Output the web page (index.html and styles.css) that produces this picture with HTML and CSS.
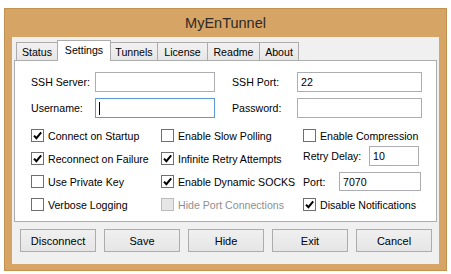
FILE: index.html
```html
<!DOCTYPE html>
<html lang="en">

<head>
    <meta charset="UTF-8">
    <title>MyEnTunnel</title>
    <link rel="stylesheet" href="styles.css">
</head>

<body>
    <div class="window">
        <div class="titleBar">MyEnTunnel</div>

        <div class="client">
            <div class="tabs">
                <div class="tab">Status</div>
                <div class="tab selected">Settings</div>
                <div class="tab">Tunnels</div>
                <div class="tab">License</div>
                <div class="tab">Readme</div>
                <div class="tab">About</div>
            </div>

            <div class="panel">
                <div class="fields">
                    <span class="label">SSH Server:</span>
                    <div class="textBox"></div>
                    <span></span>
                    <span class="label">SSH Port:</span>
                    <div class="textBox">22</div>

                    <span class="label">Username:</span>
                    <div class="textBox focused"><span class="caret"></span></div>
                    <span></span>
                    <span class="label">Password:</span>
                    <div class="textBox"></div>
                </div>

                <div class="options">
                    <label class="check"><span class="box on"></span>Connect on Startup</label>
                    <label class="check"><span class="box"></span>Enable Slow Polling</label>
                    <label class="check"><span class="box"></span>Enable Compression</label>

                    <label class="check"><span class="box on"></span>Reconnect on Failure</label>
                    <label class="check"><span class="box on"></span>Infinite Retry Attempts</label>
                    <div class="pair retry">
                        <span class="pairLabel">Retry Delay:</span>
                        <div class="textBox small">10</div>
                    </div>

                    <label class="check"><span class="box"></span>Use Private Key</label>
                    <label class="check"><span class="box on"></span>Enable Dynamic SOCKS</label>
                    <div class="pair port">
                        <span class="pairLabel">Port:</span>
                        <div class="textBox wide">7070</div>
                    </div>

                    <label class="check"><span class="box"></span>Verbose Logging</label>
                    <label class="check disabled"><span class="box"></span>Hide Port Connections</label>
                    <label class="check"><span class="box on"></span>Disable Notifications</label>
                </div>
            </div>

            <div class="buttons">
                <div class="btn">Disconnect</div>
                <div class="btn">Save</div>
                <div class="btn">Hide</div>
                <div class="btn">Exit</div>
                <div class="btn">Cancel</div>
            </div>
        </div>
    </div>
</body>

</html>
```

FILE: styles.css
```css
body {
    margin: 0;
    background-color: #ffffff;
    font-family: "Liberation Sans", Arial, sans-serif;
    font-size: 10.6px;
    color: #000000;
}

.window {
    box-sizing: border-box;
    width: 443px;
    height: 263px;
    margin: 8px 0 0 4px;
    padding: 0 7px 6px 7px;
    border: 1px solid #c4914f;
    background-color: #d6a464;
    display: flex;
    flex-direction: column;
}

.titleBar {
    height: 28px;
    display: flex;
    align-items: center;
    justify-content: center;
    font-size: 14.5px;
    color: #2e2a26;
}

.client {
    flex: 1;
    background-color: #f0f0f0;
    padding-top: 3px;
    display: flex;
    flex-direction: column;
}

/* Tab strip */
.tabs {
    display: flex;
    align-items: flex-end;
    height: 20px;
    padding-left: 4px;
}

.tab {
    box-sizing: border-box;
    height: 18px;
    border: 1px solid #acacac;
    border-bottom: none;
    margin-left: -1px;
    background-image: linear-gradient(#f2f2f2, #e6e6e6);
    display: flex;
    align-items: center;
    justify-content: center;
}

.tab:first-child {
    margin-left: 0;
    width: 42px;
}

.tab:nth-child(2) { width: 54px; }
.tab:nth-child(3) { width: 48px; }
.tab:nth-child(4) { width: 51px; }
.tab:nth-child(5) { width: 53px; }
.tab:nth-child(6) { width: 40px; }

.tab.selected {
    height: 21px;
    margin-bottom: -1px;
    background: #ffffff;
    position: relative;
    z-index: 1;
    padding-bottom: 3px;
}

/* Tab page */
.panel {
    box-sizing: border-box;
    height: 162px;
    margin: 0 2px;
    border: 1px solid #adadad;
    background-color: #ffffff;
}

.fields {
    display: grid;
    grid-template-columns: 64px 120px 17px 65px 125px;
    grid-auto-rows: 20px;
    row-gap: 6px;
    padding: 11px 0 0 16px;
    align-items: center;
}

.textBox {
    box-sizing: border-box;
    height: 20px;
    border: 1px solid #abadb3;
    background: #ffffff;
    padding: 0 3px;
    display: flex;
    align-items: center;
}

.textBox.focused {
    border-color: #5b9bd5;
}

.caret {
    width: 1px;
    height: 13px;
    background: #000000;
}

.options {
    display: grid;
    grid-template-columns: 130px 142px 1fr;
    grid-auto-rows: 23px;
    padding: 6px 0 0 16px;
    align-items: center;
}

.check {
    display: flex;
    align-items: center;
    gap: 4px;
    white-space: nowrap;
}

.box {
    box-sizing: border-box;
    width: 13px;
    height: 13px;
    border: 1px solid #6f6f6f;
    background: #ffffff;
}

.box.on {
    background-image: url("data:image/svg+xml,%3Csvg xmlns='http://www.w3.org/2000/svg' width='11' height='11'%3E%3Cpolyline points='2,5.6 4.4,8.2 9.2,2.4' fill='none' stroke='black' stroke-width='2'/%3E%3C/svg%3E");
    background-repeat: no-repeat;
}

.check.disabled {
    color: #8f8f8f;
}

.check.disabled .box {
    border-color: #bcbcbc;
    background: #e6e6e6;
}

.pair {
    display: flex;
    align-items: center;
}

.retry .pairLabel { width: 66px; }
.retry { margin-top: -5px; }
.port .pairLabel { width: 36px; }

.textBox.small { width: 50px; }
.textBox.wide { width: 82px; height: 19px; }

/* Bottom buttons */
.buttons {
    display: flex;
    gap: 8px;
    padding: 7px 0 0 8px;
}

.btn {
    box-sizing: border-box;
    width: 76px;
    height: 23px;
    border: 1px solid #acacac;
    background-image: linear-gradient(#f0f0f0, #e5e5e5);
    display: flex;
    align-items: center;
    justify-content: center;
    font-size: 11px;
}
```
